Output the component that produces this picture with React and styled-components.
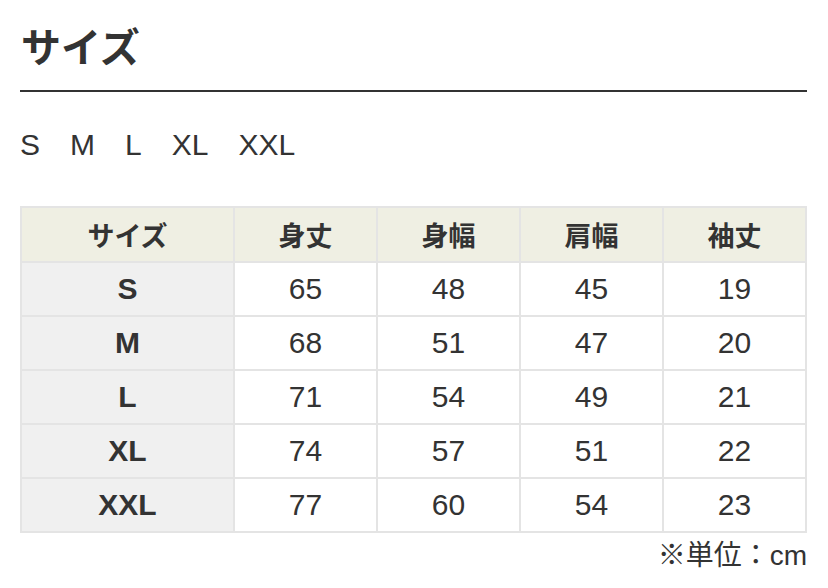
import React from 'react';
import styled, { createGlobalStyle } from 'styled-components';

const GlobalStyle = createGlobalStyle`
  body {
    margin: 0;
    background: #fff;
    color: #333;
    font-family: "Liberation Sans", "Noto Sans CJK JP", sans-serif;
  }
`;

const Page = styled.div`
  padding: 23px 21px 0 20px;
`;

const Heading = styled.h2`
  margin: 0;
  font-size: 40px;
  line-height: 50px;
  font-weight: 700;
  padding: 0 0 17px 1px;
  border-bottom: 2px solid #333;
`;

const SizeList = styled.ul`
  display: flex;
  gap: 30px;
  list-style: none;
  margin: 0;
  padding: 35px 0 0 0;
  font-size: 30px;
  line-height: 36px;
  color: #333;
`;

const Table = styled.table`
  width: 100%;
  margin-top: 43px;
  border-collapse: collapse;
  table-layout: fixed;
  border: 2px solid #e4e4e4;
`;

const HeadCell = styled.th`
  height: 53px;
  padding: 0;
  background: #efefe3;
  border: 2px solid #e4e4e4;
  font-size: 27px;
  font-weight: 700;
  color: #333;
  text-align: center;
  width: ${p => p.$wide ? '211px' : 'auto'};
`;

const Cell = styled.td`
  height: 52px;
  padding: 0;
  border: 2px solid #e4e4e4;
  text-align: center;
  font-size: 30px;
  color: #333;
  background: ${p => p.$label ? '#f0f0f0' : '#fff'};
  font-weight: ${p => p.$label ? 700 : 400};
`;

const Note = styled.p`
  margin: 5px 0 0 0;
  text-align: right;
  font-size: 28px;
  line-height: 36px;
  color: #333;
`;

const sizes = ['S', 'M', 'L', 'XL', 'XXL'];
const headers = ['サイズ', '身丈', '身幅', '肩幅', '袖丈'];
const rows = [
  ['S', 65, 48, 45, 19],
  ['M', 68, 51, 47, 20],
  ['L', 71, 54, 49, 21],
  ['XL', 74, 57, 51, 22],
  ['XXL', 77, 60, 54, 23],
];

export default function App() {
  return (
    <Page>
      <GlobalStyle />
      <Heading>サイズ</Heading>
      <SizeList>
        {sizes.map(s => <li key={s}>{s}</li>)}
      </SizeList>
      <Table>
        <thead>
          <tr>
            {headers.map((h, i) => (
              <HeadCell key={h} $wide={i === 0}>{h}</HeadCell>
            ))}
          </tr>
        </thead>
        <tbody>
          {rows.map(r => (
            <tr key={r[0]}>
              {r.map((v, i) => (
                <Cell key={i} $label={i === 0}>{v}</Cell>
              ))}
            </tr>
          ))}
        </tbody>
      </Table>
      <Note>※単位：cm</Note>
    </Page>
  );
}
